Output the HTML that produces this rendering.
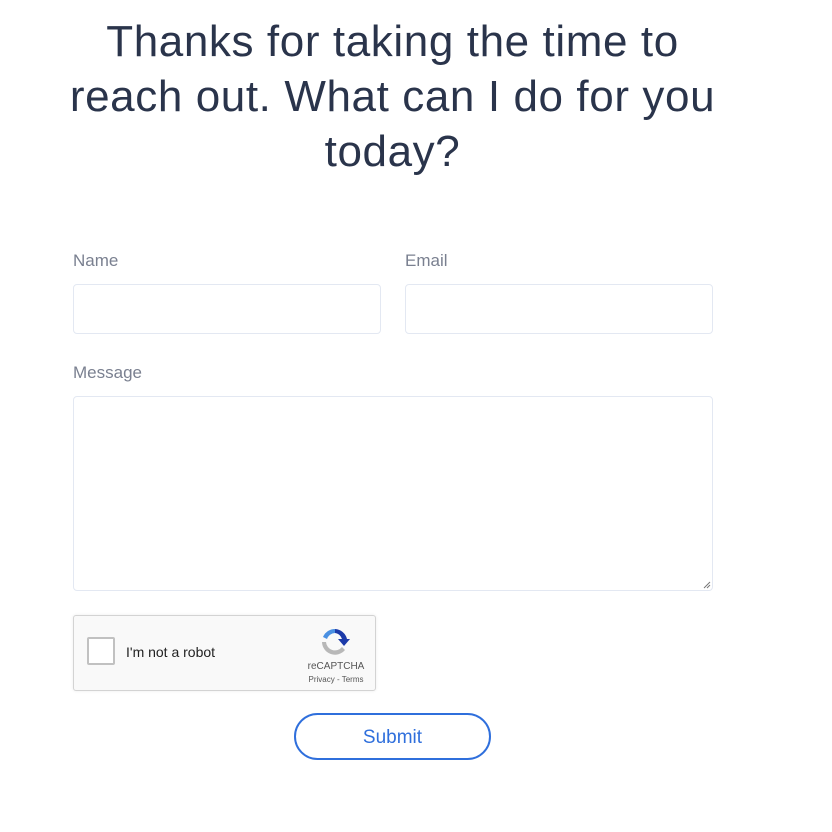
<!DOCTYPE html>
<html><head><meta charset="utf-8"><style>
body{margin:0;background:#fff;width:832px;height:832px;position:relative;font-family:"Liberation Sans",sans-serif;overflow:hidden}
h1{position:absolute;left:0;width:785px;top:14px;margin:0;text-align:center;font-weight:400;font-size:44px;line-height:55px;color:#2a344b;letter-spacing:0.6px}
.lbl{position:absolute;font-size:17px;color:#7a8090}
.in{position:absolute;border:1px solid #e3e8f2;border-radius:4px;box-sizing:border-box;background:#fff}
.rc{position:absolute;left:73px;top:615px;width:303px;height:76px;box-sizing:border-box;border:1px solid #d3d3d3;border-radius:3px;background:#f9f9f9;box-shadow:0 0 3px rgba(0,0,0,.08)}
.cb{position:absolute;left:13px;top:21px;width:28px;height:28px;box-sizing:border-box;border:2px solid #c1c1c1;border-radius:2px;background:#fff}
.btn{position:absolute;left:294px;top:713px;width:197px;height:47px;box-sizing:border-box;border:2px solid #2f6fdc;border-radius:24px;color:#2f6fdc;font-size:19px;text-align:center;line-height:45px}
</style></head><body>
<h1>Thanks for taking the time to<br>reach out. What can I do for you<br>today?</h1>
<div class="lbl" style="left:73px;top:251px">Name</div>
<div class="lbl" style="left:405px;top:251px">Email</div>
<div class="in" style="left:73px;top:284px;width:308px;height:50px"></div>
<div class="in" style="left:405px;top:284px;width:308px;height:50px"></div>
<div class="lbl" style="left:73px;top:363px">Message</div>
<div class="in" style="left:73px;top:396px;width:640px;height:195px">
<svg style="position:absolute;right:1px;bottom:1px" width="8" height="8"><path d="M7 1L1 7M7 4L4 7" stroke="#777" stroke-width="1"/></svg></div>
<div class="rc"><div class="cb"></div>
<div style="position:absolute;left:52px;top:28px;font-size:14px;color:#222">I'm not a robot</div>
<svg style="position:absolute;left:245px;top:10px" width="32" height="32" viewBox="0 0 32 32">
<path d="M16 3a13 13 0 0 0-12 8l4 2a9 9 0 0 1 8-6z" fill="#4a90e2"/>
<path d="M16 3a13 13 0 0 1 12 10h3l-6 7-6-7h4a9 9 0 0 0-7-6z" fill="#1c3aa9"/>
<path d="M3 16a13 13 0 0 0 23 8l-3-3a9 9 0 0 1-16-5z" fill="#b8b8b8"/>
</svg>
<div style="position:absolute;left:230px;top:45px;width:64px;text-align:center;font-size:10px;color:#555">reCAPTCHA</div>
<div style="position:absolute;left:228px;top:59px;width:68px;text-align:center;font-size:8px;color:#555">Privacy - Terms</div>
</div>
<div class="btn">Submit</div>
</body></html>
